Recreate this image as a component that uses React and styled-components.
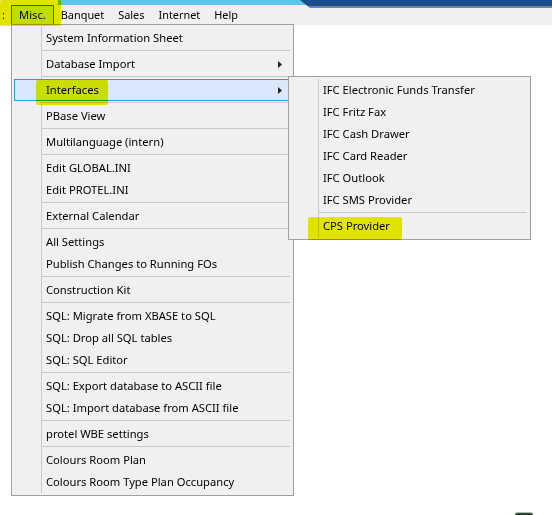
import React from 'react'
import styled, { createGlobalStyle } from 'styled-components'

const GlobalStyle = createGlobalStyle`
  html, body {
    margin: 0;
    padding: 0;
    background: #fff;
  }
  body {
    font-family: "Noto Sans", "Open Sans", sans-serif;
    font-size: 11.2px;
    color: #000;
  }
`

const Screen = styled.div`
  position: relative;
  width: 552px;
  height: 515px;
  overflow: hidden;
  background: #fff;
`

const TitleStrip = styled.div`
  position: relative;
  z-index: 1;
  display: flex;
  align-items: flex-start;
  height: 5px;
  padding-left: 300px;
  background: linear-gradient(to right, #f0f0f0 0 58px, #5cc7ea 58px);
`

const TitleDark = styled.div`
  flex: 1;
  height: 8px;
  background: linear-gradient(to bottom, #1b4e8c 0 6px, #5a86c0 6px 7px, #8d8168 7px 8px);
  clip-path: polygon(0 0, 100% 0, 100% 100%, 10px 100%);
`

const MenuBar = styled.div`
  display: flex;
  height: 20px;
  background: #f0f0f0;
`

const Lead = styled.span`
  width: 9px;
  padding-left: 2px;
  line-height: 20px;
`

const MenuTitle = styled.span`
  padding: 0 ${p => (p.$open ? 7 : 6)}px;
  font-size: ${p => (p.$open ? 11.2 : 10.9)}px;
  line-height: 18px;
  border: 1px solid transparent;
  background: ${p => (p.$open ? '#cce8ff' : 'transparent')};
  border-color: ${p => (p.$open ? '#3b70ad' : 'transparent')};
`

const Panel = styled.div`
  position: absolute;
  left: ${p => p.$x}px;
  top: ${p => p.$y}px;
  width: ${p => p.$w}px;
  box-sizing: border-box;
  display: flex;
  flex-direction: column;
  padding: 2px;
  border: 1px solid #a0a0a0;
  background: #f0f0f0;
  z-index: 2;

  &::before {
    content: '';
    position: absolute;
    left: 29px;
    top: 2px;
    bottom: 2px;
    width: 1px;
    background: #cbcbcb;
  }
`

const Item = styled.div`
  position: relative;
  display: flex;
  align-items: center;
  height: 22px;
  box-sizing: border-box;
  padding-left: 31px;
  padding-bottom: 2px;
  border: 1px solid ${p => (p.$active ? '#26a0da' : 'transparent')};
  background: ${p => (p.$active ? '#d9e9fb' : 'transparent')};
  white-space: nowrap;
`

const Arrow = styled.svg`
  margin-left: auto;
  margin-right: 8px;
  margin-top: 2px;
`

const Separator = styled.div`
  height: 1px;
  margin: 1px 1px 2px 28px;
  background: #c8c8c8;
`

const Marker = styled.div`
  position: absolute;
  left: ${p => p.$x}px;
  top: ${p => p.$y}px;
  width: ${p => p.$w}px;
  height: ${p => p.$h}px;
  background: #eef200;
  mix-blend-mode: multiply;
  border-radius: 2px;
  z-index: 10;
`

const Stub = styled.div`
  position: absolute;
  left: 515px;
  top: 512px;
  width: 18px;
  height: 3px;
  background: #3a3a3a;
  border-top: 1px solid #9ccf9c;
  border-radius: 3px 3px 0 0;
`

const mainMenu = [
  ['System Information Sheet'],
  '-',
  ['Database Import', 'sub'],
  '-',
  ['Interfaces', 'sub', 'active'],
  '-',
  ['PBase View'],
  '-',
  ['Multilanguage (intern)'],
  '-',
  ['Edit GLOBAL.INI'],
  ['Edit PROTEL.INI'],
  '-',
  ['External Calendar'],
  '-',
  ['All Settings'],
  ['Publish Changes to Running FOs'],
  '-',
  ['Construction Kit'],
  '-',
  ['SQL: Migrate from XBASE to SQL'],
  ['SQL: Drop all SQL tables'],
  ['SQL: SQL Editor'],
  '-',
  ['SQL: Export database to ASCII file'],
  ['SQL: Import database from ASCII file'],
  '-',
  ['protel WBE settings'],
  '-',
  ['Colours Room Plan'],
  ['Colours Room Type Plan Occupancy'],
]

const interfacesMenu = [
  ['IFC Electronic Funds Transfer'],
  ['IFC Fritz Fax'],
  ['IFC Cash Drawer'],
  ['IFC Card Reader'],
  ['IFC Outlook'],
  ['IFC SMS Provider'],
  '-',
  ['CPS Provider'],
]

const MenuList = ({ items }) => (
  <>
    {items.map((it, i) =>
      it === '-' ? (
        <Separator key={i} />
      ) : (
        <Item key={i} $active={it[2] === 'active'}>
          {it[0]}
          {it[1] === 'sub' && (
            <Arrow width="4" height="7" viewBox="0 0 4 7">
              <polygon points="0,0 4,3.5 0,7" fill="#222" />
            </Arrow>
          )}
        </Item>
      )
    )}
  </>
)

const App = () => {
  return (
    <Screen>
      <GlobalStyle />
      <TitleStrip>
        <TitleDark />
      </TitleStrip>
      <MenuBar>
        <Lead>:</Lead>
        <MenuTitle $open>Misc.</MenuTitle>
        <MenuTitle>Banquet</MenuTitle>
        <MenuTitle>Sales</MenuTitle>
        <MenuTitle>Internet</MenuTitle>
        <MenuTitle>Help</MenuTitle>
      </MenuBar>

      <Panel $x={11} $y={24} $w={283}>
        <MenuList items={mainMenu} />
      </Panel>
      <Panel $x={288} $y={76} $w={243}>
        <MenuList items={interfacesMenu} />
      </Panel>

      <Marker $x={0} $y={0} $w={61} $h={26} />
      <Marker $x={36} $y={80} $w={72} $h={25} />
      <Marker $x={308} $y={217} $w={94} $h={23} />
      <Stub />
    </Screen>
  )
}

export default App
